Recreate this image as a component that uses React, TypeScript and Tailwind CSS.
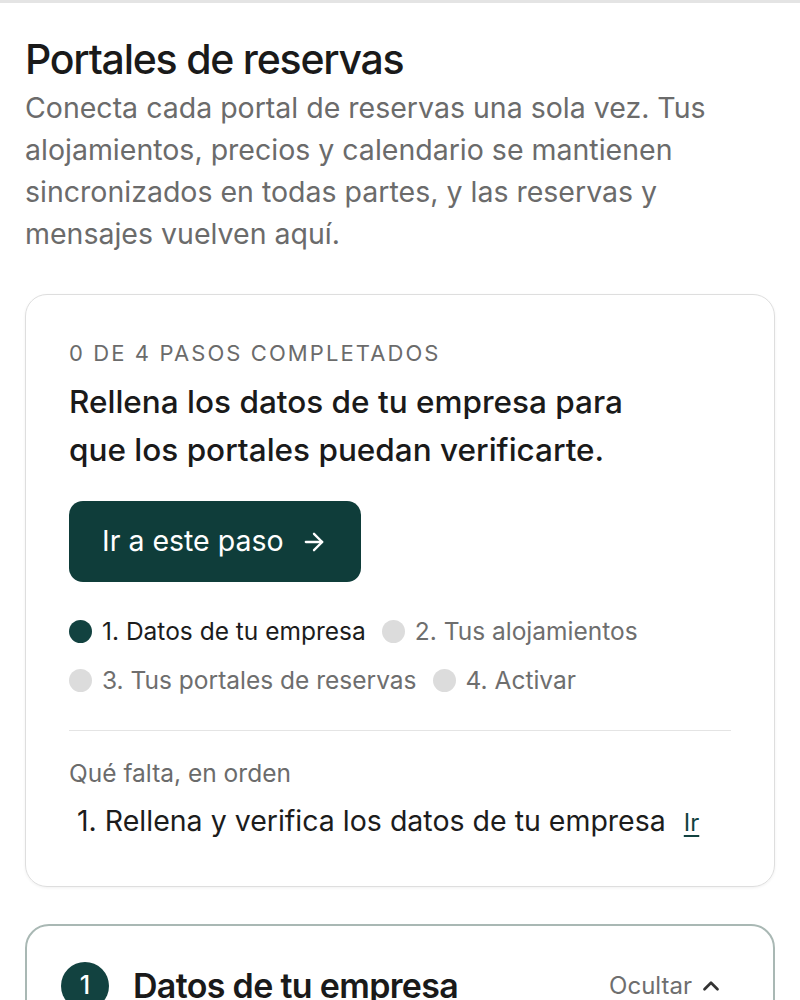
import { ArrowRight, ChevronUp } from 'lucide-react'

const steps = [
  { n: 1, label: 'Datos de tu empresa', active: true },
  { n: 2, label: 'Tus alojamientos', active: false },
  { n: 3, label: 'Tus portales de reservas', active: false },
  { n: 4, label: 'Activar', active: false },
]

function StepPill({ n, label, active }: { n: number; label: string; active: boolean }) {
  return (
    <div className="flex items-center gap-[10px]">
      <span className={`w-[23px] h-[23px] rounded-full ${active ? 'bg-[#124240]' : 'bg-[#dcdcdc]'}`} />
      <span className={`text-[24.5px] leading-[30px] ${active ? 'text-[#1c1c1c]' : 'text-[#6e6e6e]'}`}>
        {n}. {label}
      </span>
    </div>
  )
}

export default function App() {
  return (
    <div className="min-h-[1000px] bg-white overflow-hidden" style={{ fontFamily: 'Inter, "Noto Sans", sans-serif' }}>
      <div className="h-[3px] bg-[#e4e4e4]" />
      <main className="px-[25px] pt-[33px]">
        <h1 className="text-[41px] leading-[46px] font-medium tracking-[-0.03em] text-[#1a1a1a]">Portales de reservas</h1>
        <p className="mt-[5px] text-[28.5px] leading-[42px] text-[#6b6b6b]">
          Conecta cada portal de reservas una sola vez. Tus alojamientos, precios y calendario se mantienen
          sincronizados en todas partes, y las reservas y mensajes vuelven aquí.
        </p>

        <section className="mt-[39px] rounded-[22px] border border-[#dedede] shadow-[0_1px_3px_rgba(0,0,0,0.06)] px-[43px] pt-[44px] pb-[46px]">
          <p className="text-[22px] leading-[28px] tracking-[0.095em] uppercase text-[#6b6b6b]">0 de 4 pasos completados</p>
          <h2 className="mt-[11px] text-[31.5px] leading-[48px] font-medium text-[#1a1a1a] pr-[60px]">
            Rellena los datos de tu empresa para que los portales puedan verificarte.
          </h2>
          <button className="mt-[27px] h-[81px] px-[33px] rounded-[14px] bg-[#0f3d3a] text-white text-[28.5px] flex items-center gap-[16px]">
            Ir a este paso
            <ArrowRight size={28} strokeWidth={2} />
          </button>

          <div className="mt-[34px] flex flex-wrap gap-x-[16px] gap-y-[19px] pr-[20px]">
            {steps.map(s => <StepPill key={s.n} {...s} />)}
          </div>

          <div className="mt-[35px] border-t border-[#e4e4e4]" />

          <p className="mt-[27px] text-[24.5px] leading-[30px] text-[#6b6b6b]">Qué falta, en orden</p>
          <ol className="mt-[16px] pl-[8px] text-[28.5px] leading-[34px] text-[#1c1c1c]">
            <li className="flex items-baseline gap-[18px]">
              <span>1. Rellena y verifica los datos de tu empresa</span>
              <a href="#" className="text-[24px] text-[#124240] underline underline-offset-[4px]">Ir</a>
            </li>
          </ol>
        </section>

        <section className="mt-[37px] rounded-[24px] border-2 border-[#a9b8b4] px-[34px] pt-[36px] pb-[40px]">
          <div className="flex items-center gap-[24px]">
            <span className="w-[48px] h-[48px] rounded-full bg-[#124240] text-white text-[25px] font-medium flex items-center justify-center">1</span>
            <h3 className="flex-1 text-[34px] leading-[40px] font-semibold tracking-[-0.02em] text-[#1a1a1a]">Datos de tu empresa</h3>
            <button className="flex items-center gap-[6px] text-[24px] text-[#6e6e6e] pr-[15px]">
              Ocultar
              <ChevronUp size={26} strokeWidth={2.5} className="text-[#333]" />
            </button>
          </div>
        </section>
      </main>
    </div>
  )
}
